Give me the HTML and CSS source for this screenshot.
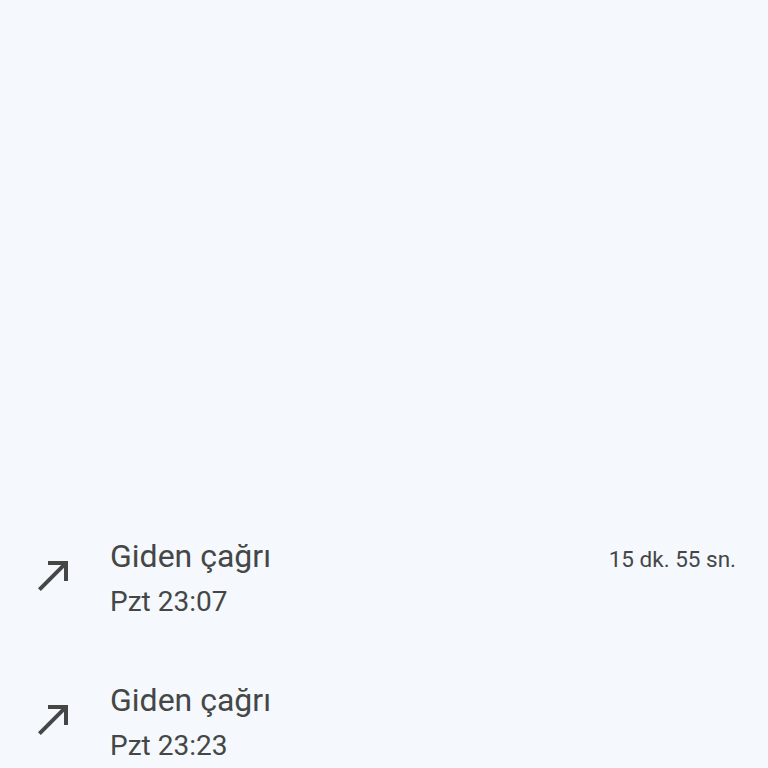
FILE: index.html
```html
<!DOCTYPE html>
<html lang="tr">
<head>
  <meta charset="UTF-8" />
  <meta name="viewport" content="width=device-width, initial-scale=1.0"/>
  <title>Arama geçmişi</title>
  <link rel="stylesheet" href="styles.css">
</head>
<body>
  <div class="call-list">
    <div class="call-row">
      <svg class="call-icon" viewBox="0 0 24 24"><path d="M9 5v2h6.59L4 18.59 5.41 20 17 8.41V15h2V5z"/></svg>
      <div class="call-info">
        <div class="call-top">
          <span class="call-title">Giden çağrı</span>
          <span class="call-duration">15 dk. 55 sn.</span>
        </div>
        <div class="call-time">Pzt 23:07</div>
      </div>
    </div>
    <div class="call-row">
      <svg class="call-icon" viewBox="0 0 24 24"><path d="M9 5v2h6.59L4 18.59 5.41 20 17 8.41V15h2V5z"/></svg>
      <div class="call-info">
        <div class="call-top">
          <span class="call-title">Giden çağrı</span>
        </div>
        <div class="call-time">Pzt 23:23</div>
      </div>
    </div>
  </div>
</body>
</html>
```

FILE: styles.css
```css
html, body {
  height: 100%;
}

body {
  margin: 0;
  font-family: Roboto, 'Noto Sans', sans-serif;
  background-color: #f5f8fd;
  color: #444746;
  overflow: hidden;
}

.call-list {
  padding-top: 506px;
}

.call-row {
  display: flex;
  align-items: center;
  height: 144px;
  padding: 0 32px 0 30px;
}

.call-icon {
  width: 48px;
  height: 48px;
  margin-bottom: 6px;
  fill: #444746;
  flex-shrink: 0;
}

.call-info {
  flex: 1;
  margin-left: 32px;
}

.call-top {
  display: flex;
  align-items: baseline;
  justify-content: space-between;
}

.call-title {
  font-size: 32px;
  line-height: 40px;
}

.call-duration {
  font-size: 22.5px;
}

.call-time {
  font-size: 28px;
  line-height: 36px;
  margin-top: 8px;
}
```
